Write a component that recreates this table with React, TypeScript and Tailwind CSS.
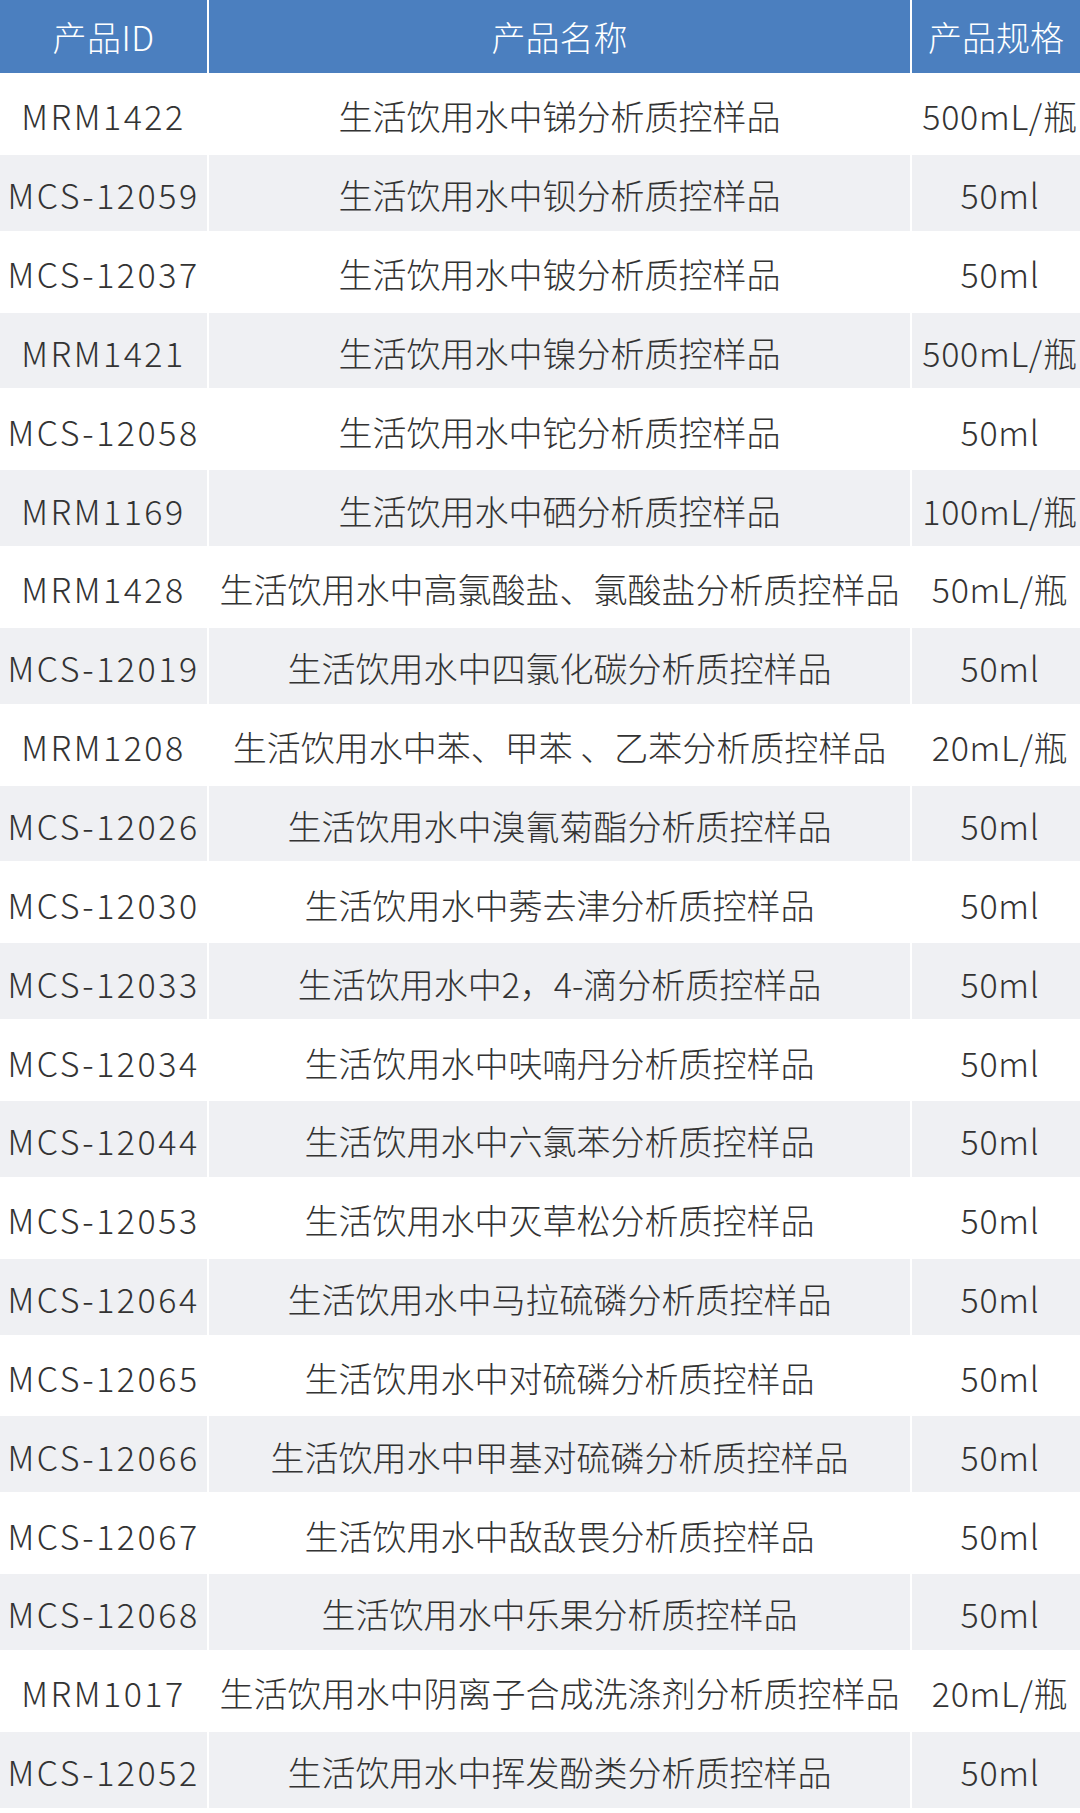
import React from "react";

const rows: [string, string, string][] = [
  ["MRM1422", "生活饮用水中锑分析质控样品", "500mL/瓶"],
  ["MCS-12059", "生活饮用水中钡分析质控样品", "50ml"],
  ["MCS-12037", "生活饮用水中铍分析质控样品", "50ml"],
  ["MRM1421", "生活饮用水中镍分析质控样品", "500mL/瓶"],
  ["MCS-12058", "生活饮用水中铊分析质控样品", "50ml"],
  ["MRM1169", "生活饮用水中硒分析质控样品", "100mL/瓶"],
  ["MRM1428", "生活饮用水中高氯酸盐、氯酸盐分析质控样品", "50mL/瓶"],
  ["MCS-12019", "生活饮用水中四氯化碳分析质控样品", "50ml"],
  ["MRM1208", "生活饮用水中苯、甲苯 、乙苯分析质控样品", "20mL/瓶"],
  ["MCS-12026", "生活饮用水中溴氰菊酯分析质控样品", "50ml"],
  ["MCS-12030", "生活饮用水中莠去津分析质控样品", "50ml"],
  ["MCS-12033", "生活饮用水中2，4-滴分析质控样品", "50ml"],
  ["MCS-12034", "生活饮用水中呋喃丹分析质控样品", "50ml"],
  ["MCS-12044", "生活饮用水中六氯苯分析质控样品", "50ml"],
  ["MCS-12053", "生活饮用水中灭草松分析质控样品", "50ml"],
  ["MCS-12064", "生活饮用水中马拉硫磷分析质控样品", "50ml"],
  ["MCS-12065", "生活饮用水中对硫磷分析质控样品", "50ml"],
  ["MCS-12066", "生活饮用水中甲基对硫磷分析质控样品", "50ml"],
  ["MCS-12067", "生活饮用水中敌敌畏分析质控样品", "50ml"],
  ["MCS-12068", "生活饮用水中乐果分析质控样品", "50ml"],
  ["MRM1017", "生活饮用水中阴离子合成洗涤剂分析质控样品", "20mL/瓶"],
  ["MCS-12052", "生活饮用水中挥发酚类分析质控样品", "50ml"],
];

export default function App() {
  return (
    <div
      className="w-[1080px] h-[1813px] bg-white overflow-hidden text-[34px] font-light text-[#333333]"
      style={{ fontFamily: '"Noto Sans CJK SC", "Noto Sans", sans-serif' }}
    >
      <div className="grid grid-cols-[207px_701px_1fr] gap-x-[2px] gap-y-[3px] auto-rows-[75.85px] grid-rows-[73px]">
        <div className="bg-[#4b7fbf] text-white flex items-center justify-center whitespace-nowrap tracking-[0.5px]">产品ID</div>
        <div className="bg-[#4b7fbf] text-white flex items-center justify-center whitespace-nowrap">产品名称</div>
        <div className="bg-[#4b7fbf] text-white flex items-center justify-center whitespace-nowrap">产品规格</div>
        {rows.map((r, i) => {
          const bg = i % 2 === 1 ? "bg-[#eff0f3]" : "bg-white";
          return (
            <React.Fragment key={i}>
              <div className={`${bg} flex items-center justify-center whitespace-nowrap pt-[4px] tracking-[2.5px] overflow-visible`}>{r[0]}</div>
              <div className={`${bg} flex items-center justify-center whitespace-nowrap pt-[4px]`}>{r[1]}</div>
              <div className={`${bg} flex items-center justify-center whitespace-nowrap pt-[4px] pl-[8px] tracking-[0.7px]`}>{r[2]}</div>
            </React.Fragment>
          );
        })}
      </div>
    </div>
  );
}
